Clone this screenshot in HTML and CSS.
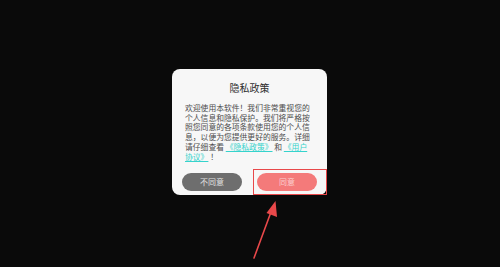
FILE: index.html
```html
<!DOCTYPE html>
<html lang="zh">
<head>
<meta charset="utf-8">
<link rel="stylesheet" href="styles.css">
</head>
<body>
<div class="dialog">
  <div class="title">隐私政策</div>
  <div class="content">
    欢迎使用本软件！我们非常重视您的<br>
    个人信息和隐私保护。我们将严格按<br>
    照您同意的各项条款使用您的个人信<br>
    息，以便为您提供更好的服务。详细<br>
    请仔细查看 <a class="link">《隐私政策》</a> 和 <a class="link">《用户<br>协议》</a> ！
  </div>
  <div class="actions">
    <div class="btn btn-no">不同意</div>
    <div class="btn btn-yes">同意</div>
  </div>
  <div class="highlight"></div>
</div>
<svg class="arrow" width="500" height="267" viewBox="0 0 500 267">
  <line x1="254" y1="258" x2="271" y2="212" stroke="#e8484a" stroke-width="1.6" stroke-linecap="round"/>
  <polygon points="275.5,201 277,217 266.5,213" fill="#e8484a"/>
</svg>
</body>
</html>
```
FILE: styles.css
```css
html, body {
  margin: 0;
  padding: 0;
}
body {
  width: 500px;
  height: 267px;
  background: #0a0a0a;
  display: flex;
  align-items: center;
  justify-content: center;
  font-family: "Noto Sans CJK SC", "Noto Sans", sans-serif;
  position: relative;
  overflow: hidden;
}
.dialog {
  position: relative;
  width: 155px;
  height: 126px;
  box-sizing: border-box;
  background: #f7f7f7;
  border-radius: 8px;
  padding-top: 12px;
  display: flex;
  flex-direction: column;
  margin-left: -1px;
  margin-top: -3px;
}
.title {
  font-size: 10px;
  line-height: 14px;
  height: 14px;
  text-align: center;
  color: #2e2e2e;
}
.content {
  margin-top: 8px;
  padding: 0 12px 0 13px;
  font-size: 7.8px;
  line-height: 9.7px;
  color: #4c4c4c;
  white-space: nowrap;
}
.link {
  color: #35d3cc;
  text-decoration: underline;
  text-underline-offset: 1px;
}
.actions {
  margin-top: 12px;
  display: flex;
  gap: 15px;
  padding: 0 10px;
}
.btn {
  width: 60px;
  height: 18px;
  border-radius: 9px;
  font-size: 8px;
  line-height: 18px;
  text-align: center;
}
.btn-no {
  background: #6e6e6e;
  color: #e2e2e2;
}
.btn-yes {
  background: #f47a7a;
  color: #fccfcf;
}
.highlight {
  position: absolute;
  left: 81px;
  top: 100px;
  width: 74px;
  height: 26px;
  box-sizing: border-box;
  border: 1.5px solid #e8484a;
}
.arrow {
  position: absolute;
  left: 0;
  top: 0;
}
```
